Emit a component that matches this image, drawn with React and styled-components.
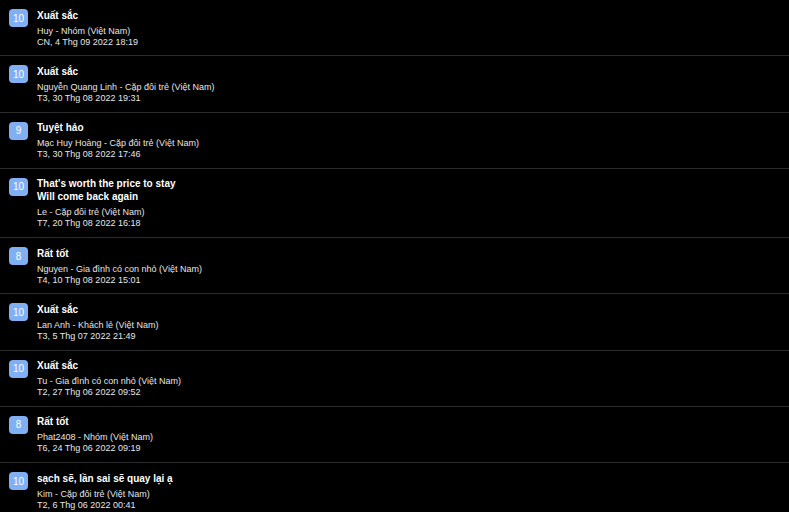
import styled, { createGlobalStyle } from "styled-components";

const reviews = [
  { score: 10, title: ["Xuất sắc"], guest: "Huy - Nhóm (Việt Nam)", date: "CN, 4 Thg 09 2022 18:19" },
  { score: 10, title: ["Xuất sắc"], guest: "Nguyễn Quang Linh - Cặp đôi trẻ (Việt Nam)", date: "T3, 30 Thg 08 2022 19:31" },
  { score: 9, title: ["Tuyệt hảo"], guest: "Mạc Huy Hoàng - Cặp đôi trẻ (Việt Nam)", date: "T3, 30 Thg 08 2022 17:46" },
  {
    score: 10,
    title: ["That's worth the price to stay", "Will come back again"],
    guest: "Le - Cặp đôi trẻ (Việt Nam)",
    date: "T7, 20 Thg 08 2022 16:18",
  },
  { score: 8, title: ["Rất tốt"], guest: "Nguyen - Gia đình có con nhỏ (Việt Nam)", date: "T4, 10 Thg 08 2022 15:01" },
  { score: 10, title: ["Xuất sắc"], guest: "Lan Anh - Khách lẻ (Việt Nam)", date: "T3, 5 Thg 07 2022 21:49" },
  { score: 10, title: ["Xuất sắc"], guest: "Tu - Gia đình có con nhỏ (Việt Nam)", date: "T2, 27 Thg 06 2022 09:52" },
  { score: 8, title: ["Rất tốt"], guest: "Phat2408 - Nhóm (Việt Nam)", date: "T6, 24 Thg 06 2022 09:19" },
  { score: 10, title: ["sạch sẽ, lần sai sẽ quay lại ạ"], guest: "Kim - Cặp đôi trẻ (Việt Nam)", date: "T2, 6 Thg 06 2022 00:41" },
];

const GlobalStyle = createGlobalStyle`
  html, body {
    margin: 0;
    padding: 0;
    background: #000;
    overflow: hidden;
  }
  body {
    font-family: "Liberation Sans", Arial, sans-serif;
    color: #fff;
  }
`;

const App = () => {
  return (
    <>
      <GlobalStyle />
      <List>
        {reviews.map((r, i) => (
          <Row key={i}>
            <Score>{r.score}</Score>
            <Body>
              <Title>
                {r.title.map((line, j) => (
                  <div key={j}>{line}</div>
                ))}
              </Title>
              <Meta>
                <div>{r.guest}</div>
                <div>{r.date}</div>
              </Meta>
            </Body>
          </Row>
        ))}
      </List>
    </>
  );
};

export default App;

const List = styled.div`
  width: 789px;
  height: 512px;
  overflow: hidden;
  background: #000;
`;

const Row = styled.div`
  display: flex;
  align-items: flex-start;
  gap: 9px;
  padding: 8.5px 9px 7.75px;
  border-bottom: 1px solid #2b2b2b;
`;

const Score = styled.div`
  flex: none;
  width: 19px;
  height: 18px;
  margin-top: 0.5px;
  border-radius: 4px;
  background: #80b0f3;
  color: #fff;
  font-size: 10px;
  display: flex;
  align-items: center;
  justify-content: center;
`;

const Body = styled.div`
  display: flex;
  flex-direction: column;
  gap: 4px;
`;

const Title = styled.div`
  font-size: 10px;
  font-weight: 700;
  line-height: 13px;
  color: #fff;
`;

const Meta = styled.div`
  font-size: 9px;
  line-height: 11px;
  color: #e6e6e6;
`;
